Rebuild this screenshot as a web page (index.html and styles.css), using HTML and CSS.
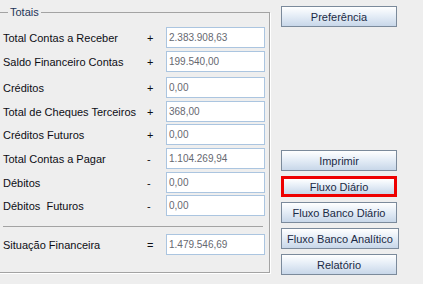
FILE: index.html
```html
<!DOCTYPE html>
<html>
<head>
<meta charset="UTF-8">
<title>Totais</title>
<link rel="stylesheet" href="styles.css">
</head>
<body>
<div class="screen">
	<fieldset class="totais">
		<legend>Totais</legend>
		<div class="rows">
			<div class="row"><span class="label">Total Contas a Receber</span><span class="sign">+</span><span class="field">2.383.908,63</span></div>
			<div class="row loose"><span class="label">Saldo Financeiro Contas</span><span class="sign">+</span><span class="field">199.540,00</span></div>
			<div class="row"><span class="label">Créditos</span><span class="sign">+</span><span class="field">0,00</span></div>
			<div class="row tight"><span class="label">Total de Cheques Terceiros</span><span class="sign">+</span><span class="field">368,00</span></div>
			<div class="row"><span class="label">Créditos Futuros</span><span class="sign">+</span><span class="field">0,00</span></div>
			<div class="row"><span class="label">Total Contas a Pagar</span><span class="sign">-</span><span class="field">1.104.269,94</span></div>
			<div class="row tight"><span class="label">Débitos</span><span class="sign">-</span><span class="field">0,00</span></div>
			<div class="row"><span class="label">Débitos&nbsp; Futuros</span><span class="sign">-</span><span class="field">0,00</span></div>
		</div>
		<hr class="sep">
		<div class="row"><span class="label">Situação Financeira</span><span class="sign">=</span><span class="field">1.479.546,69</span></div>
	</fieldset>

	<div class="actions">
		<button class="btn">Preferência</button>
		<div class="group">
			<button class="btn">Imprimir</button>
			<button class="btn focus">Fluxo Diário</button>
			<button class="btn">Fluxo Banco Diário</button>
			<button class="btn wide">Fluxo Banco Analítico</button>
			<button class="btn">Relatório</button>
		</div>
	</div>
</div>
</body>
</html>
```

FILE: styles.css
```css
* {
	margin: 0;
	padding: 0;
	box-sizing: border-box;
}

body {
	background: #eeeeee;
	font-family: "Liberation Sans", Arial, sans-serif;
	font-size: 11px;
	color: #0d0d14;
}

.screen {
	display: flex;
	align-items: flex-start;
}

/* painel com borda titulada */
.totais {
	width: 271px;
	height: 267px;
	margin: 6px 0 0 -1px;
	padding: 0 3px;
	border: 1px solid #a3a3a3;
	box-shadow: 1px 1px 0 #fff;
}

.totais legend {
	margin-left: 5px;
	padding: 0 2px;
	line-height: 13px;
	color: #1e3558;
}

.rows {
	padding-top: 8px;
}

.row {
	display: flex;
	align-items: center;
	height: 21px;
	margin-bottom: 3px;
}

.row.loose {
	margin-bottom: 5px;
}

.row.tight {
	margin-bottom: 2px;
}

.label {
	flex: 0 0 143px;
	white-space: nowrap;
}

.sign {
	flex: 0 0 20px;
	padding-left: 1px;
}

.field {
	flex: 0 0 99px;
	height: 21px;
	line-height: 19px;
	padding-left: 2px;
	background: #fff;
	border: 1px solid #abc5e0;
	font-size: 10px;
	color: #666870;
}

.sep {
	border: 0;
	border-top: 1px solid #a3a3a3;
	margin: 10px 3px 7px 0;
}

/* botoes da direita */
.actions {
	display: flex;
	flex-direction: column;
	margin-left: 11px;
	padding-top: 6px;
}

.group {
	display: flex;
	flex-direction: column;
	gap: 5px;
	margin-top: 123px;
}

.btn {
	width: 116px;
	height: 21px;
	font-family: "Liberation Sans", Arial, sans-serif;
	font-size: 11px;
	color: #1b2a45;
	background: linear-gradient(#ffffff, #e6eef7 45%, #c8d7e9);
	border: 1px solid #7b8a9b;
}

.btn.wide {
	width: 118px;
}

.btn.focus {
	border: 3px solid #ee0000;
}
```
